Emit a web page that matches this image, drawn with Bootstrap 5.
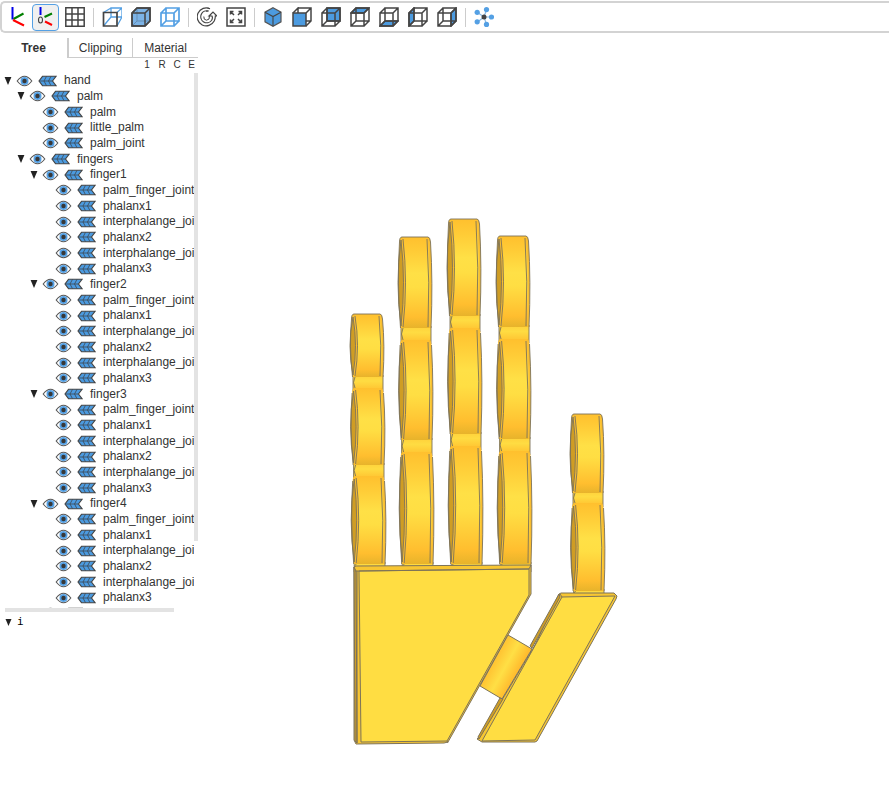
<!DOCTYPE html>
<html lang="en">
<head>
<meta charset="utf-8">
<meta name="viewport" content="width=device-width, initial-scale=1">
<title>hand</title>
<link href="https://cdn.jsdelivr.net/npm/bootstrap@5.3.0/dist/css/bootstrap.min.css" rel="stylesheet">
<style>
  body { font-family: "Liberation Sans", Arial, sans-serif; font-size: 12px; line-height: 15px; color: #333; background: #fff; }
  button { background: none; border: 0; padding: 0; color: inherit; }
  svg { display: block; }
  .toolbar { gap: 2px; height: 32px; margin-top: 1px; padding: 1px; border: 2px solid #d3d3d3; border-right: 0; border-radius: 5px 0 0 5px; }
  .tool { width: 27px; height: 27px; border: 1px solid transparent; border-radius: 4px; display: flex; align-items: center; justify-content: center; flex: none; }
  .tool.active { background: #f0f0f0; border-color: #54a0e4; }
  .tool svg { width: 20px; height: 20px; flex: none; fill: none; stroke: #444; stroke-width: 1.5; }
  .divider { width: 1px; height: 19px; margin: 0 2px 0 3px; background: #ccc; flex: none; }
  .side { width: 198px; flex: none; }
  .side-tabs { height: 20px; margin-top: 5px; }
  .side-tabs button { border-bottom: 1px solid #ccc; height: 20px; padding-top: 1px; }
  .side-tabs .t1 { width: 67px; font-weight: bold; border-bottom: 0; }
  .side-tabs .t2 { width: 66px; border-left: 2px solid #ccc; border-right: 1px solid #ccc; }
  .side-tabs .t3 { width: 65px; }
  .levels { gap: 1px; height: 15px; font-size: 10px; line-height: 13px; }
  .levels button { width: 14px; height: 13px; }
  .levels button:last-child { width: 13px; }
  .tree-box { height: 535px; overflow: hidden; }
  .tree { display: grid; grid-auto-rows: 15px 16px 16px; flex: 1; min-width: 0; overflow: hidden; padding-left: 4px; margin: 0; align-content: start; list-style: none; }
  .node { display: flex; align-items: center; white-space: nowrap; }
  .lv1 { padding-left: 13px; } .lv2 { padding-left: 26px; } .lv3 { padding-left: 39px; }
  .arrow { width: 8px; height: 8px; flex: none; margin-right: 4px; }
  .eye { margin-right: 5px; } .shape { margin-right: 7px; }
  .vbar { width: 4px; height: 468px; background: #e3e3e3; flex: none; }
  .hbar { width: 169px; height: 4px; margin-left: 5px; background: #e3e3e3; }
  .info { font: 11px/16px "DejaVu Sans Mono", monospace; margin: 2px 0 0 5px; color: #000; gap: 5px; }
  .viewer svg { width: 100%; height: auto; }
</style>
<script src="https://cdn.jsdelivr.net/npm/bootstrap@5.3.0/dist/js/bootstrap.bundle.min.js"></script>
</head>
<body>
<svg class="position-absolute" width="0" height="0" aria-hidden="true">
  <symbol id="cube" viewBox="0 0 20 20"><path d="M1 6h13v13H1zM6 1h13v13H6zM1 6l5-5M14 6l5-5M14 19l5-5M1 19l5-5"/></symbol>
  <symbol id="eye" viewBox="0 0 16 12"><path d="M.7 6Q8-3.500 15.300 6 8 15.500 .7 6z" fill="#fff" stroke="#555" stroke-width="1.100"/><circle cx="8" cy="6" r="4" fill="#54a0e4"/><circle cx="8" cy="6" r="2.200" fill="#383838"/></symbol>
  <symbol id="shape" viewBox="0 0 19 12"><path d="M4.500 1.300H18L14.500 6 18 10.700H4.500L1 6z" fill="#4c9be0" stroke="#444" stroke-width="1.100"/><path d="M1 6h13.500M8.500 1.300L6 6l2.500 4.700M13 1.300L10.500 6l2.500 4.700" fill="none" stroke="#3c4650" stroke-width=".8"/></symbol>
  <symbol id="down" viewBox="0 0 8 8"><path d="M.6 0h6.800L4 8z" fill="#222"/></symbol>
</svg>

<header class="toolbar d-flex align-items-center" role="toolbar" aria-label="View tools">
  <button class="tool" aria-label="Axes"><svg viewBox="0 0 20 20"><path d="M5.500 0v12.500" stroke="#0000e8" stroke-width="2"/><path d="M6.500 12l10-5.500" stroke="#008000" stroke-width="2"/><path d="M6 13l11 5.500" stroke="#f00" stroke-width="2"/></svg></button>
  <button class="tool active" aria-label="Axes at origin"><svg viewBox="0 0 20 20"><path d="M4.500 0v8" stroke="#0000e8" stroke-width="2"/><path d="M8.500 10l7.500-3.500" stroke="#008000" stroke-width="2"/><path d="M9 14.500l7 3.500" stroke="#f00" stroke-width="2"/><ellipse cx="4.500" cy="13" rx="2" ry="3" stroke-width="1.100"/></svg></button>
  <button class="tool" aria-label="Grid"><svg viewBox="0 0 20 20"><path d="M.8.8h18.400v18.400H.8zM.8 7h18.400M.8 13h18.400M7 .8v18.400M13 .8v18.400"/></svg></button>
  <span class="divider"></span>
  <button class="tool" aria-label="Perspective"><svg viewBox="0 0 20 20"><path d="M9 1h11v9H9zM1.500 5.500L9 1M15 5.500L20 1M15 19l5-9M1.500 19L9 10" stroke="#54a0e4" stroke-width="1.300"/><path d="M1.500 5.500H15V19H1.500z" stroke-width="1.700"/></svg></button>
  <button class="tool" aria-label="Transparent"><svg viewBox="0 0 20 20"><path d="M1 6l5-5h13v13l-5 5H1z" fill="#7cb3e6"/><path d="M6 1v13h13M1 19l5-5" stroke="#668fb5" stroke-width="1"/><path d="M1 6l5-5h13v13l-5 5H1zM1 6h13v13M14 6l5-5"/></svg></button>
  <button class="tool" aria-label="Black edges"><svg viewBox="0 0 20 20"><g stroke="#54a0e4" stroke-width="1.700"><use href="#cube"/></g></svg></button>
  <span class="divider"></span>
  <button class="tool" aria-label="Reset view"><svg viewBox="0 0 20 20"><path d="M13 1.700A9 9 0 1 0 17.200 14M11.500 4A6 6 0 1 0 14.500 13.500M17.200 14Q18.500 11 18.300 9H20L16 5l-4 4h3Q16 11 14.500 13.500" stroke-width="1.200"/><path d="M13 1.700L10.500 1M11.500 4L9 4.300M12.500 9Q13 13 9.500 13.200 6.500 13 6.800 9.500" stroke-width="1"/></svg></button>
  <button class="tool" aria-label="Fit"><svg viewBox="0 0 20 20"><path d="M1 1h18v18H1z"/><path d="M4.500 7.500v-3h3M12.500 4.500h3v3M15.500 12.500v3h-3M7.500 15.500h-3v-3M4.500 4.500L8 8M15.500 4.500L12 8M15.500 15.500L12 12M4.500 15.500L8 12"/></svg></button>
  <span class="divider"></span>
  <button class="tool" aria-label="Isometric"><svg viewBox="0 0 20 20"><path d="M10 .8l8 4.400v9.600l-8 4.400-8-4.400V5.200z" fill="#4c9be0" stroke="#555" stroke-width="1.200"/><path d="M2 5.200l8 4.400 8-4.400M10 9.600v9.600" stroke-width="1.100"/></svg></button>
  <button class="tool" aria-label="Front"><svg viewBox="0 0 20 20"><path d="M6 1h13v13l-5 5M14 6l5-5M1 6l5-5v5M14 14h5"/><path d="M1 6h13v13H1z" fill="#4c9be0"/></svg></button>
  <button class="tool" aria-label="Back"><svg viewBox="0 0 20 20"><path d="M6 1h13v13H6z" fill="#4c9be0"/><use href="#cube"/></svg></button>
  <button class="tool" aria-label="Top"><svg viewBox="0 0 20 20"><path d="M1 6l5-5h13l-5 5z" fill="#4c9be0"/><use href="#cube"/></svg></button>
  <button class="tool" aria-label="Bottom"><svg viewBox="0 0 20 20"><path d="M1 19l5-5h13l-5 5z" fill="#4c9be0"/><use href="#cube"/></svg></button>
  <button class="tool" aria-label="Left"><svg viewBox="0 0 20 20"><path d="M1 6l5-5v13l-5 5z" fill="#4c9be0"/><use href="#cube"/></svg></button>
  <button class="tool" aria-label="Right"><svg viewBox="0 0 20 20"><path d="M14 6l5-5v13l-5 5z" fill="#4c9be0"/><use href="#cube"/></svg></button>
  <span class="divider"></span>
  <button class="tool" aria-label="Explode"><svg viewBox="0 0 20 20"><path d="M10 10h8M10 10l2.500-7.500M10 10L3.500 5.500M10 10l-6.500 5M10 10l2.500 7.500" stroke="#8ab9e2" stroke-width="1.200"/><g fill="#54a0e4" stroke="none"><circle cx="17.500" cy="10" r="2.600"/><circle cx="12.500" cy="2.600" r="2.600"/><circle cx="3.200" cy="5.300" r="2.600"/><circle cx="3.200" cy="14.800" r="2.600"/><circle cx="12.500" cy="17.400" r="2.600"/></g><circle cx="10" cy="10" r="2.500" fill="#444" stroke="none"/></svg></button>
</header>

<main class="d-flex">
  <aside class="side">
    <div class="side-tabs d-flex" role="tablist">
      <button class="t1" role="tab" aria-selected="true">Tree</button>
      <button class="t2" role="tab" aria-selected="false">Clipping</button>
      <button class="t3" role="tab" aria-selected="false">Material</button>
    </div>
    <div class="levels d-flex justify-content-end"><button>1</button><button>R</button><button>C</button><button>E</button></div>
    <div class="tree-box d-flex"><ul class="tree" id="tree"></ul><div class="vbar"></div></div>
    <div class="hbar"></div>
    <button class="info d-flex align-items-center"><svg width="7" height="7"><use href="#down"/></svg>i</button>
  </aside>
  <section class="viewer flex-grow-1" aria-label="Model view">
    <svg viewBox="198 33 691 769" role="img" aria-label="Model of a hand">
      <defs>
        <linearGradient id="skin" x1="0" y1="0" x2="0" y2="1"><stop offset="0" stop-color="#ffc02e"/><stop offset=".15" stop-color="#ffcb36"/><stop offset=".4" stop-color="#ffe046"/><stop offset=".55" stop-color="#ffde43"/><stop offset=".88" stop-color="#ffbe2f"/><stop offset="1" stop-color="#e7b32b"/></linearGradient>
        <linearGradient id="knuckle" x1="0" y1="0" x2="0" y2="1"><stop offset="0" stop-color="#ffd03a"/><stop offset=".4" stop-color="#ffdc42"/><stop offset="1" stop-color="#ffc331"/></linearGradient>
        <linearGradient id="pin" gradientUnits="userSpaceOnUse" x1="492" y1="659" x2="519" y2="674"><stop offset="0" stop-color="#ffbd2e"/><stop offset=".5" stop-color="#ffdf45"/><stop offset=".95" stop-color="#ffb92c"/><stop offset="1" stop-color="#ffc431"/></linearGradient>
      </defs>
      <g id="fingers" stroke="#7d7359" stroke-width=".9" fill="none"></g>
      <g stroke="#7d7359" stroke-width="1" stroke-linejoin="round">
        <path d="M354 567l2-1 175-1v29L448 742l-4 1-88 1-2-4z" fill="#f8c632"/>
        <path d="M354 567l2 4 1 172-2-2z" fill="#d3a025"/>
        <path d="M359 571l170-2v26L447 741l-86 1z" fill="#ffdd42"/>
        <path d="M355 571l4 0 170-2M357 571v172M447 741l1 2M529 569l2-4" fill="none"/>
        <path d="M508 635l24 14-30 50-22-13z" fill="url(#pin)"/>
        <path d="M559 594l2-1h53l3 3-1 3-79 142-2 1h-53l-5-3 2-2 26-42 30-50z" fill="#f7c632"/>
        <path d="M559 594l-29 52 2 2 28-51z" fill="#cf9e25"/>
        <path d="M478 737l22-39 3 1-24 40z" fill="#cf9e25"/>
        <path d="M562 597l53-1-80 144-53 1z" fill="#ffdd42"/>
        <path d="M562 597l-2-3" fill="none"/>
      </g>
    </svg>
  </section>
</main>

<script>
  const phalanges = ['palm_finger_joint', 'phalanx1', 'interphalange_joi', 'phalanx2', 'interphalange_joi', 'phalanx3'];
  const nodes = [[0, 'hand', 1], [1, 'palm', 1], [2, 'palm'], [2, 'little_palm'], [2, 'palm_joint'], [1, 'fingers', 1]];
  for (let i = 1; i <= 4; i++) nodes.push([2, 'finger' + i, 1], ...phalanges.map(n => [3, n]));
  nodes.push([2, '', 1]);
  document.getElementById('tree').innerHTML = nodes.map(([level, name, open]) =>
    `<li class="node lv${level}">` +
    (open ? `<button class="arrow" aria-label="Collapse ${name}"><svg width="8" height="8"><use href="#down"/></svg></button>` : '<span class="arrow"></span>') +
    `<button class="eye" aria-label="Show ${name}"><svg width="17" height="12"><use href="#eye"/></svg></button>` +
    `<button class="shape" aria-label="Faces of ${name}"><svg width="19" height="12"><use href="#shape"/></svg></button>` +
    `<span>${name}</span></li>`).join('');

  // Each finger: left edge, right edge, then [top, bottom] of every phalanx.
  const fingers = [
    [350, 384, [314, 377], [388, 465], [476, 564]],
    [398, 432, [237, 328], [340, 440], [452, 564]],
    [447, 481, [219, 316], [328, 434], [446, 564]],
    [496, 530, [236, 327], [339, 439], [451, 564]],
    [570, 604, [414, 493], [503, 591]]
  ];
  let art = '';
  for (const [left, right, ...parts] of fingers) {
    parts.forEach(([top, bottom], i) => {
      const l = left + i * .6, r = right + i, m = (top + bottom) / 2, last = i === parts.length - 1;
      const next = last ? bottom + 4 : parts[i + 1][0];
      const leftEdge = `${l + 1.5} ${top + 5}Q${l - 1} ${m} ${l + 2.5} ${bottom}`;
      const rightEdge = `${r - 1} ${bottom}Q${r + 1} ${m} ${r - 1.5} ${top + 5}`;
      art += `<path d="M${l + 3} ${bottom - 2}V${next + 2}H${r - 1}V${bottom - 2}z" fill="url(#knuckle)" stroke="none"/>`;
      art += `<path d="M${l + 3} ${bottom - 2}V${next + 4}M${l + 5} ${bottom}Q${l + 2} ${(bottom + next) / 2} ${l + 5} ${next}M${r - 1} ${bottom - 2}V${next + 4}"/>`;
      art += `<path d="M${l + 4} ${top}Q${l + 1.5} ${top} ${leftEdge}L${rightEdge}Q${r - 2} ${top} ${r - 4} ${top}z" fill="#f9bd30" stroke="none"/>`;
      art += `<path d="M${l + 3} ${top + 3}Q${l - 3} ${m} ${l + 3} ${bottom - 2}Q${l + 8} ${m} ${l + 3} ${top + 3}z" fill="#cf9d24"/>`;
      art += `<path d="M${l + 5} ${top}Q${l + 10} ${m} ${l + 5} ${bottom}H${r - 3}Q${r - 1} ${m} ${r - 4} ${top}z" fill="url(#skin)" stroke="none"/>`;
      art += `<path d="M${l + 5} ${top + 2}Q${l + 10} ${m} ${l + 5} ${bottom - 1}M${r - 4} ${bottom - 1}Q${r - 2} ${m} ${r - 5} ${top + 2}M${leftEdge}M${rightEdge}"/>`;
      if (i === 0) art += `<path d="M${l + 1.5} ${top + 5}Q${l + 1.5} ${top} ${l + 4} ${top}H${r - 4}Q${r - 2} ${top} ${r - 1.5} ${top + 5}"/>`;
    });
  }
  document.getElementById('fingers').innerHTML = art;
</script>
</body>
</html>
